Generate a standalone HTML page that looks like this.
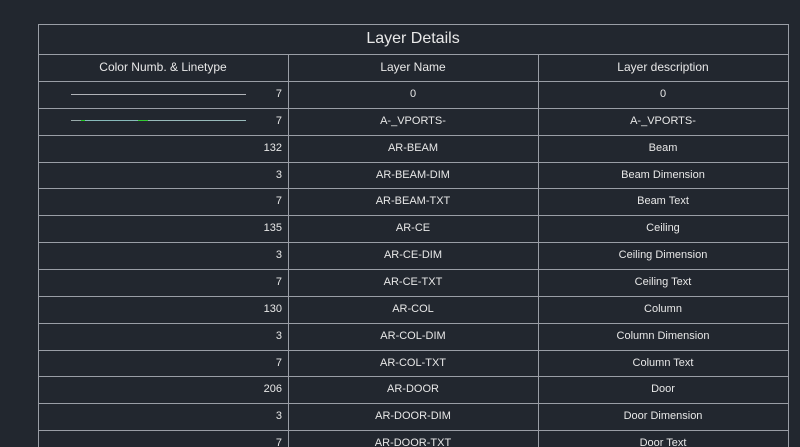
<!DOCTYPE html>
<html style="overflow:hidden;height:447px"><head><style>
body{margin:0;width:800px;height:447px;background:#22272f;overflow:hidden;font-family:"Liberation Sans",sans-serif;color:#e8e8e8;position:relative}
.h{position:absolute;left:38px;width:750px;height:1px;background:#9a9ea6}
.v{position:absolute;width:1px;background:#9a9ea6}
.t{position:absolute;font-size:11px;text-align:center;width:250px;line-height:27px}
.n{position:absolute;font-size:11px;text-align:right;width:100px;left:182px;line-height:27px}
</style></head><body>
<div class="h" style="top:24px"></div>
<div class="h" style="top:54px"></div>
<div class="v" style="left:38px;top:24px;height:423px"></div>
<div class="v" style="left:788px;top:24px;height:423px"></div>
<div class="v" style="left:288px;top:54px;height:393px"></div>
<div class="v" style="left:538px;top:54px;height:393px"></div>
<div style="position:absolute;left:38px;width:750px;top:24px;line-height:30px;text-align:center;font-size:16px">Layer Details</div>
<div class="t" style="left:38px;top:54px;font-size:12px">Color Numb. &amp; Linetype</div>
<div class="t" style="left:288px;top:54px;font-size:12px">Layer Name</div>
<div class="t" style="left:538px;top:54px;font-size:12px">Layer description</div>
<div style="position:absolute;left:71px;top:94px;width:175px;height:1px;background:#b0b3b8"></div>
<div style="position:absolute;left:71px;top:120px;width:175px;height:1px;background:linear-gradient(90deg,#9aa 0,#9aa 10px,#2c2 10px,#2c2 14px,#8bb 14px,#8bb 67px,#3c3 67px,#3c3 77px,#9bb 77px)"></div>
<div id="rows"></div>
<script>
var d=[["7","0","0"],["7","A-_VPORTS-","A-_VPORTS-"],["132","AR-BEAM","Beam"],["3","AR-BEAM-DIM","Beam Dimension"],["7","AR-BEAM-TXT","Beam Text"],["135","AR-CE","Ceiling"],["3","AR-CE-DIM","Ceiling Dimension"],["7","AR-CE-TXT","Ceiling Text"],["130","AR-COL","Column"],["3","AR-COL-DIM","Column Dimension"],["7","AR-COL-TXT","Column Text"],["206","AR-DOOR","Door"],["3","AR-DOOR-DIM","Door Dimension"],["7","AR-DOOR-TXT","Door Text"]];
var h="";
for(var i=0;i<d.length;i++){var y=81+i*26.85;
h+='<div class="h" style="top:'+Math.round(y)+'px"></div>';
h+='<div class="n" style="top:'+Math.round(y)+'px">'+d[i][0]+'</div>';
h+='<div class="t" style="left:288px;top:'+Math.round(y)+'px">'+d[i][1]+'</div>';
h+='<div class="t" style="left:538px;top:'+Math.round(y)+'px">'+d[i][2]+'</div>';}
document.getElementById("rows").innerHTML=h;
</script>
</body></html>
